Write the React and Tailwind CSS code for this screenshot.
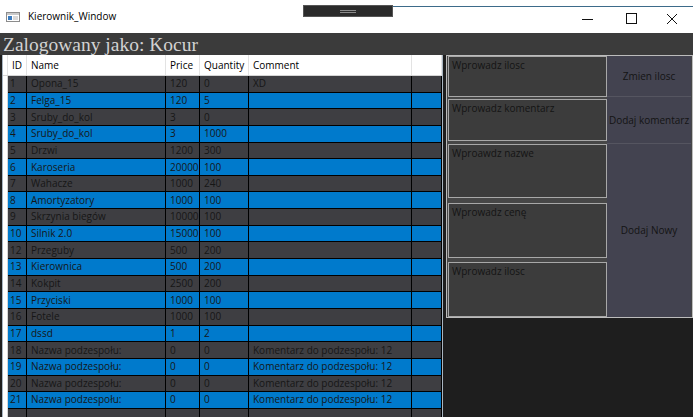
import React from "react";

const cols = [
  { key: "id", label: "ID", w: "w-[19px]" },
  { key: "name", label: "Name", w: "w-[139px]" },
  { key: "price", label: "Price", w: "w-[34px]" },
  { key: "qty", label: "Quantity", w: "w-[49px]" },
  { key: "comment", label: "Comment", w: "w-[163px]" },
  { key: "extra", label: "", w: "w-[30px]" },
];

const parts = [
  [1, "Opona_15", 120, 0, "XD"],
  [2, "Felga_15", 120, 5, ""],
  [3, "Sruby_do_kol", 3, 0, ""],
  [4, "Sruby_do_kol", 3, 1000, ""],
  [5, "Drzwi", 1200, 300, ""],
  [6, "Karoseria", 20000, 100, ""],
  [7, "Wahacze", 1000, 240, ""],
  [8, "Amortyzatory", 1000, 100, ""],
  [9, "Skrzynia biegów", 10000, 100, ""],
  [10, "Silnik 2.0", 15000, 100, ""],
  [12, "Przeguby", 500, 200, ""],
  [13, "Kierownica", 500, 200, ""],
  [14, "Kokpit", 2500, 200, ""],
  [15, "Przyciski", 1000, 100, ""],
  [16, "Fotele", 1000, 100, ""],
  [17, "dssd", 1, 2, ""],
  [18, "Nazwa podzespołu:", 0, 0, "Komentarz do podzespołu: 12"],
  [19, "Nazwa podzespołu:", 0, 0, "Komentarz do podzespołu: 12"],
  [20, "Nazwa podzespołu:", 0, 0, "Komentarz do podzespołu: 12"],
  [21, "Nazwa podzespołu:", 0, 0, "Komentarz do podzespołu: 12"],
  // next row is only partly in view at the bottom edge
  ["", "", "", "", ""],
];

const ui = { fontFamily: '"Open Sans", "Noto Sans", sans-serif' };

function TitleBar() {
  return (
    <div className="relative h-[33px] bg-white flex items-center">
      {/* debug toolbar overlay */}
      <div className="absolute left-[303px] top-[5px] w-[90px] h-[12px] bg-[#2b2b2b] border border-[#555] flex items-center justify-center">
        <div className="w-[16px] h-[3px] border-y border-[#8a8a8a]" />
      </div>
      <div className="absolute left-[393px] top-[6px] w-[300px] h-px bg-[#3d6b8a]" />
      <svg width="14" height="10" viewBox="0 0 14 10" className="ml-[6px] mt-[1px]">
        <rect x="0.5" y="0.5" width="13" height="9" fill="#fff" stroke="#8c8c8c" />
        <rect x="1" y="1" width="12" height="2" fill="#c9c9c9" />
        <rect x="2" y="4" width="4" height="4" fill="#3a7bbf" />
        <rect x="7" y="4" width="5" height="4" fill="#d8d8d8" />
      </svg>
      <span className="ml-[8px] text-[10px] text-black" style={ui}>Kierownik_Window</span>
      <div className="ml-auto mr-px flex items-center">
        <svg width="46" height="33" viewBox="0 0 46 33">
          <line x1="16" y1="19.5" x2="27" y2="19.5" stroke="#111" strokeWidth="1" />
        </svg>
        <svg width="40" height="33" viewBox="0 0 40 33">
          <rect x="14.5" y="13.5" width="10" height="10" fill="none" stroke="#111" strokeWidth="1" />
        </svg>
        <svg width="40" height="33" viewBox="0 0 40 33">
          <path d="M15 14 L25 24 M25 14 L15 24" stroke="#111" strokeWidth="1" />
        </svg>
      </div>
    </div>
  );
}

function DataGrid() {
  return (
    <div className="ml-[2px] w-[441px] border-l border-r border-[#a9b6c2] bg-white overflow-hidden" style={ui}>
      <div className="flex h-[21px] border-b border-[#d5d5d5] text-[10px] text-black">
        <div className="w-[5px] border-r border-[#e3e3e3]" />
        {cols.map((c) => (
          <div key={c.key} className={`${c.w} shrink-0 border-r border-[#e3e3e3] flex items-center pl-[4px]`}>
            {c.label}
          </div>
        ))}
      </div>
      {parts.map((p, i) => (
        <div key={i} className="flex h-[16.65px] text-[10px] text-[#161616]">
          <div className="w-[5px] shrink-0 bg-white border-r border-[#d5d5d5]" />
          <div className={`flex flex-1 border-b border-black ${i % 2 === 0 ? "bg-[#3e3e42]" : "bg-[#007acc]"}`}>
            {cols.map((c, j) => (
              <div key={c.key} className={`${c.w} shrink-0 border-r border-black flex items-center whitespace-nowrap overflow-hidden ${j === 0 ? "pl-[2px]" : "pl-[4px]"}`}>
                {j < 5 ? p[j] : ""}
              </div>
            ))}
          </div>
        </div>
      ))}
    </div>
  );
}

function Field({ label, h }) {
  return (
    <div className={`${h} bg-[#3c3c3c] border border-[#a8a8a8] px-[3px] pt-[1px] text-[10px] text-[#141414]`} style={ui}>
      {label}
    </div>
  );
}

function Action({ label, cls }) {
  return (
    <div className={`${cls} bg-[#434350] flex items-center justify-center text-[10px] text-[#141414] whitespace-nowrap`} style={ui}>
      {label}
    </div>
  );
}

function Panel() {
  return (
    <div className="ml-[3px] w-[247px] h-[263px] border border-[#bcbcbc] bg-[#474747] px-px flex">
      <div className="w-[159px] flex flex-col">
        <Field label="Wprowadz ilosc" h="h-[41px]" />
        <div className="h-[2px]" />
        <Field label="Wprowadz komentarz" h="h-[42px]" />
        <div className="h-[3px]" />
        <Field label="Wproawdz nazwe" h="h-[54px]" />
        <div className="h-[5px]" />
        <Field label="Wprowadz cenę" h="h-[55px]" />
        <div className="h-[4px]" />
        <Field label="Wprowadz ilosc" h="h-[55px]" />
      </div>
      <div className="flex-1 flex flex-col">
        <Action label="Zmien ilosc" cls="h-[41px] border-b border-[#555560]" />
        <Action label="Dodaj komentarz" cls="h-[47px] border-b border-[#555560]" />
        <Action label="Dodaj Nowy" cls="flex-1" />
      </div>
    </div>
  );
}

export default function App() {
  return (
    <div className="w-[700px] h-[417px] bg-white overflow-hidden">
      <div className="w-[693px] h-[417px] flex flex-col bg-[#1e1e1e]">
        <TitleBar />
        <div className="h-[22px] bg-[#3b3b3b] flex items-center pl-[3px]">
          <span className="text-[19.5px] leading-none text-[#d2d2d2] mt-[1px]" style={{ fontFamily: '"Liberation Serif", serif' }}>
            Zalogowany jako: Kocur
          </span>
        </div>
        <div className="flex flex-1 overflow-hidden">
          <DataGrid />
          <Panel />
        </div>
      </div>
    </div>
  );
}
